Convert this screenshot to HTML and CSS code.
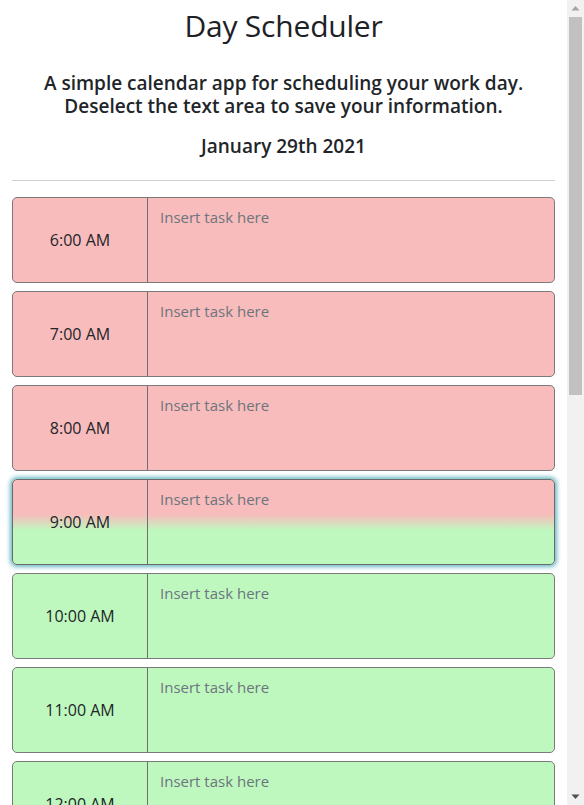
FILE: index.html
```html
<!DOCTYPE html>
<html lang="en">
<head>
<meta charset="utf-8">
<title>Day Scheduler</title>
<link rel="stylesheet" href="styles.css">
</head>
<body>
<div class="page">
  <header class="jumbotron">
    <h1 class="title">Day Scheduler</h1>
    <p class="lead">A simple calendar app for scheduling your work day.<br>Deselect the text area to save your information.</p>
    <p class="current-day">January 29th 2021</p>
  </header>
  <hr class="divider">
  <main class="schedule">
    <div class="time-block past"><div class="hour">6:00 AM</div><textarea class="description" placeholder="Insert task here"></textarea></div>
    <div class="time-block past"><div class="hour">7:00 AM</div><textarea class="description" placeholder="Insert task here"></textarea></div>
    <div class="time-block past"><div class="hour">8:00 AM</div><textarea class="description" placeholder="Insert task here"></textarea></div>
    <div class="time-block present"><div class="hour">9:00 AM</div><textarea class="description" placeholder="Insert task here"></textarea></div>
    <div class="time-block future"><div class="hour">10:00 AM</div><textarea class="description" placeholder="Insert task here"></textarea></div>
    <div class="time-block future"><div class="hour">11:00 AM</div><textarea class="description" placeholder="Insert task here"></textarea></div>
    <div class="time-block future"><div class="hour">12:00 AM</div><textarea class="description" placeholder="Insert task here"></textarea></div>
    <div class="time-block future"><div class="hour">1:00 PM</div><textarea class="description" placeholder="Insert task here"></textarea></div>
    <div class="time-block future"><div class="hour">2:00 PM</div><textarea class="description" placeholder="Insert task here"></textarea></div>
  </main>
</div>
<div class="scrollbar" aria-hidden="true">
  <svg class="arrow arrow-up" width="17" height="17" viewBox="0 0 17 17"><path d="M4.5 10.5 L8.5 6 L12.5 10.5 Z" fill="#a3a3a3"/></svg>
  <div class="thumb"></div>
  <svg class="arrow arrow-down" width="17" height="17" viewBox="0 0 17 17"><path d="M4.5 6.5 L8.5 11 L12.5 6.5 Z" fill="#505050"/></svg>
</div>
</body>
</html>
```

FILE: styles.css
```css
html, body {
  margin: 0;
  padding: 0;
  background: #ffffff;
}
html {
  scrollbar-width: none;
}
body {
  font-family: "Open Sans", "Noto Sans", sans-serif;
  color: #212529;
}
.page {
  padding: 0 29px 20px 12px;
}
.jumbotron {
  text-align: center;
}
.title {
  margin: 0;
  padding-top: 6px;
  font-size: 30px;
  font-weight: 500;
  letter-spacing: -0.2px;
  line-height: 40px;
  color: #1d2125;
}
.lead {
  margin: 26px 0 0 0;
  font-size: 19px;
  font-weight: 600;
  line-height: 23px;
}
.current-day {
  margin: 17px 0 0 0;
  font-size: 19px;
  font-weight: 600;
  line-height: 23px;
}
.divider {
  margin: 22px 0 16px 0;
  border: 0;
  border-top: 1px solid #cfcfcf;
  height: 0;
}
.schedule {
  display: flex;
  flex-direction: column;
  gap: 8px;
}
.time-block {
  display: flex;
  height: 86px;
  box-sizing: border-box;
  border: 1px solid #7a7a7a;
  border-radius: 5px;
  overflow: hidden;
}
.past { background: #f8bcbc; }
.future { background: #bff8bf; }
.present {
  background: linear-gradient(to bottom, #f8bcbc 0%, #f8bcbc 41%, #bff8bf 60%, #bff8bf 100%);
  box-shadow: 0 0 4px 2px rgba(60, 160, 175, 0.75);
  border-color: #6a6a6a;
}
.hour {
  flex: 0 0 134px;
  display: flex;
  align-items: center;
  justify-content: center;
  font-size: 16px;
  color: #212529;
  border-right: 1px solid #6f6f6f;
}
.description {
  flex: 1;
  border: 0;
  margin: 0;
  padding: 8px 12px;
  background: transparent;
  resize: none;
  font-family: inherit;
  font-size: 15px;
  line-height: 22px;
  color: #212529;
  outline: none;
}
.description::placeholder {
  color: #6c757d;
  opacity: 1;
}
.scrollbar {
  position: fixed;
  top: 0;
  right: 0;
  width: 17px;
  height: 100vh;
  background: #f1f1f1;
  display: flex;
  flex-direction: column;
  align-items: center;
}
.arrow {
  flex: 0 0 17px;
  display: block;
}
.thumb {
  width: 13px;
  height: 378px;
  background: #c1c1c1;
}
.arrow-down {
  margin-top: auto;
}
```
